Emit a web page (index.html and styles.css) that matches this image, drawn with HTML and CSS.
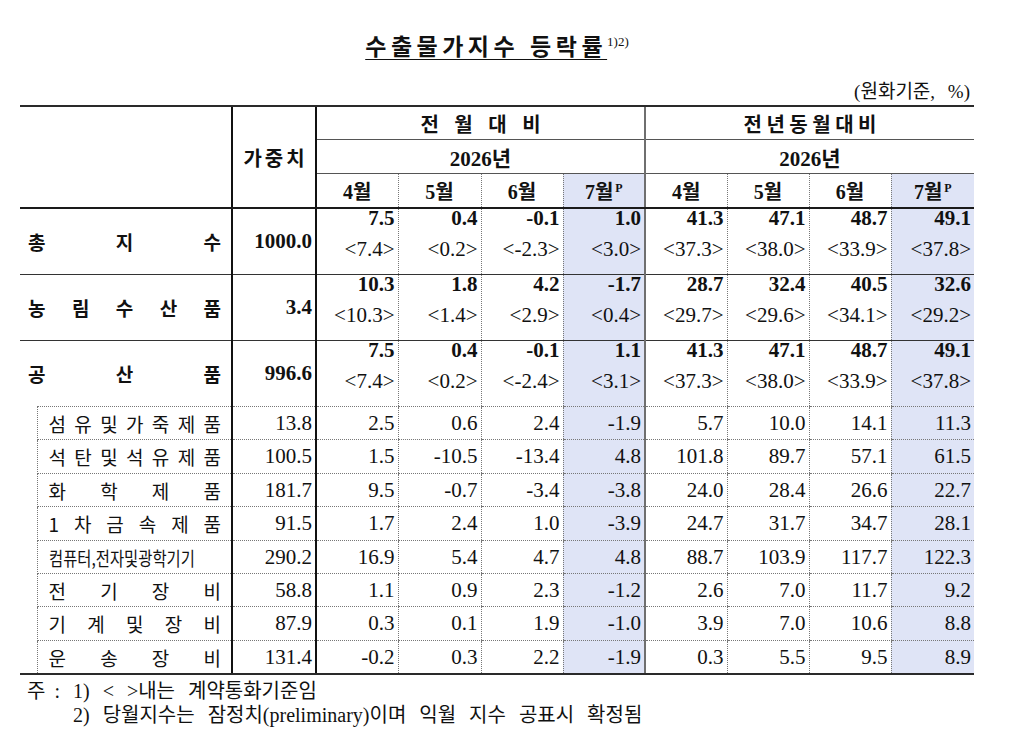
FILE: index.html
```html
<!DOCTYPE html>
<html lang="ko">
<head>
<meta charset="utf-8">
<title>수출물가지수 등락률</title>
<link rel="stylesheet" href="styles.css">
</head>
<body>
<div class="page">
  <div class="title"><span class="t">수출물가지수 등락률</span><sup>1)2)</sup></div>
  <div class="unit">(원화기준, %)</div>
  <table class="tbl">
    <colgroup>
      <col class="k-ind"><col class="k-lab"><col class="k-w">
      <col class="k-m"><col class="k-m2"><col class="k-m"><col class="k-m">
      <col class="k-m"><col class="k-m"><col class="k-m"><col class="k-m2">
    </colgroup>
    <thead>
      <tr class="h1">
        <th colspan="2" rowspan="3" class="corner"></th>
        <th rowspan="3" class="w hw"><span class="hwt">가중치</span></th>
        <th colspan="4" class="c1 grp"><span class="wide"><span>전</span><span>월</span><span>대</span><span>비</span></span></th>
        <th colspan="4" class="c5 grp"><span class="ls">전년동월대비</span></th>
      </tr>
      <tr class="h2">
        <th colspan="4" class="c1 yr">2026년</th>
        <th colspan="4" class="c5 yr">2026년</th>
      </tr>
      <tr class="h3">
        <th class="c1 mo">4월</th><th class="cd mo">5월</th><th class="cd mo">6월</th><th class="cd mo hl">7월<sup class="p">P</sup></th>
        <th class="c5 mo">4월</th><th class="cd mo">5월</th><th class="cd mo">6월</th><th class="cd mo hl">7월<sup class="p">P</sup></th>
      </tr>
    </thead>
    <tbody>
      <tr class="big">
        <th colspan="2" class="lab"><span class="dist"><span>총</span><span>지</span><span>수</span></span></th>
        <td class="w n bw">1000.0</td>
        <td class="n c1 dv"><div class="b">7.5</div><div class="s">&lt;7.4&gt;</div></td>
        <td class="n cd dv"><div class="b">0.4</div><div class="s">&lt;0.2&gt;</div></td>
        <td class="n cd dv"><div class="b">-0.1</div><div class="s">&lt;-2.3&gt;</div></td>
        <td class="n cd dv hl"><div class="b">1.0</div><div class="s">&lt;3.0&gt;</div></td>
        <td class="n c5 dv"><div class="b">41.3</div><div class="s">&lt;37.3&gt;</div></td>
        <td class="n cd dv"><div class="b">47.1</div><div class="s">&lt;38.0&gt;</div></td>
        <td class="n cd dv"><div class="b">48.7</div><div class="s">&lt;33.9&gt;</div></td>
        <td class="n cd dv hl"><div class="b">49.1</div><div class="s">&lt;37.8&gt;</div></td>
      </tr>
      <tr class="big">
        <th colspan="2" class="lab"><span class="dist"><span>농</span><span>림</span><span>수</span><span>산</span><span>품</span></span></th>
        <td class="w n bw">3.4</td>
        <td class="n c1 dv"><div class="b">10.3</div><div class="s">&lt;10.3&gt;</div></td>
        <td class="n cd dv"><div class="b">1.8</div><div class="s">&lt;1.4&gt;</div></td>
        <td class="n cd dv"><div class="b">4.2</div><div class="s">&lt;2.9&gt;</div></td>
        <td class="n cd dv hl"><div class="b">-1.7</div><div class="s">&lt;0.4&gt;</div></td>
        <td class="n c5 dv"><div class="b">28.7</div><div class="s">&lt;29.7&gt;</div></td>
        <td class="n cd dv"><div class="b">32.4</div><div class="s">&lt;29.6&gt;</div></td>
        <td class="n cd dv"><div class="b">40.5</div><div class="s">&lt;34.1&gt;</div></td>
        <td class="n cd dv hl"><div class="b">32.6</div><div class="s">&lt;29.2&gt;</div></td>
      </tr>
      <tr class="big last-big">
        <th colspan="2" class="lab"><span class="dist"><span>공</span><span>산</span><span>품</span></span></th>
        <td class="w n bw">996.6</td>
        <td class="n c1 dv"><div class="b">7.5</div><div class="s">&lt;7.4&gt;</div></td>
        <td class="n cd dv"><div class="b">0.4</div><div class="s">&lt;0.2&gt;</div></td>
        <td class="n cd dv"><div class="b">-0.1</div><div class="s">&lt;-2.4&gt;</div></td>
        <td class="n cd dv hl"><div class="b">1.1</div><div class="s">&lt;3.1&gt;</div></td>
        <td class="n c5 dv"><div class="b">41.3</div><div class="s">&lt;37.3&gt;</div></td>
        <td class="n cd dv"><div class="b">47.1</div><div class="s">&lt;38.0&gt;</div></td>
        <td class="n cd dv"><div class="b">48.7</div><div class="s">&lt;33.9&gt;</div></td>
        <td class="n cd dv hl"><div class="b">49.1</div><div class="s">&lt;37.8&gt;</div></td>
      </tr>
      <tr class="sub r33">
        <td class="ind"></td>
        <th class="slab"><span class="dist"><span>섬</span><span>유</span><span>및</span><span>가</span><span>죽</span><span>제</span><span>품</span></span></th>
        <td class="w n">13.8</td>
        <td class="n c1">2.5</td><td class="n cd">0.6</td><td class="n cd">2.4</td><td class="n cd hl">-1.9</td>
        <td class="n c5">5.7</td><td class="n cd">10.0</td><td class="n cd">14.1</td><td class="n cd hl">11.3</td>
      </tr>
      <tr class="sub r34">
        <td class="ind"></td>
        <th class="slab"><span class="dist"><span>석</span><span>탄</span><span>및</span><span>석</span><span>유</span><span>제</span><span>품</span></span></th>
        <td class="w n">100.5</td>
        <td class="n c1">1.5</td><td class="n cd">-10.5</td><td class="n cd">-13.4</td><td class="n cd hl">4.8</td>
        <td class="n c5">101.8</td><td class="n cd">89.7</td><td class="n cd">57.1</td><td class="n cd hl">61.5</td>
      </tr>
      <tr class="sub r33">
        <td class="ind"></td>
        <th class="slab"><span class="dist"><span>화</span><span>학</span><span>제</span><span>품</span></span></th>
        <td class="w n">181.7</td>
        <td class="n c1">9.5</td><td class="n cd">-0.7</td><td class="n cd">-3.4</td><td class="n cd hl">-3.8</td>
        <td class="n c5">24.0</td><td class="n cd">28.4</td><td class="n cd">26.6</td><td class="n cd hl">22.7</td>
      </tr>
      <tr class="sub r34">
        <td class="ind"></td>
        <th class="slab"><span class="dist"><span>1</span><span>차</span><span>금</span><span>속</span><span>제</span><span>품</span></span></th>
        <td class="w n">91.5</td>
        <td class="n c1">1.7</td><td class="n cd">2.4</td><td class="n cd">1.0</td><td class="n cd hl">-3.9</td>
        <td class="n c5">24.7</td><td class="n cd">31.7</td><td class="n cd">34.7</td><td class="n cd hl">28.1</td>
      </tr>
      <tr class="sub r33">
        <td class="ind"></td>
        <th class="slab"><span class="squeeze">컴퓨터,전자및광학기기</span></th>
        <td class="w n">290.2</td>
        <td class="n c1">16.9</td><td class="n cd">5.4</td><td class="n cd">4.7</td><td class="n cd hl">4.8</td>
        <td class="n c5">88.7</td><td class="n cd">103.9</td><td class="n cd">117.7</td><td class="n cd hl">122.3</td>
      </tr>
      <tr class="sub r33">
        <td class="ind"></td>
        <th class="slab"><span class="dist"><span>전</span><span>기</span><span>장</span><span>비</span></span></th>
        <td class="w n">58.8</td>
        <td class="n c1">1.1</td><td class="n cd">0.9</td><td class="n cd">2.3</td><td class="n cd hl">-1.2</td>
        <td class="n c5">2.6</td><td class="n cd">7.0</td><td class="n cd">11.7</td><td class="n cd hl">9.2</td>
      </tr>
      <tr class="sub r34">
        <td class="ind"></td>
        <th class="slab"><span class="dist"><span>기</span><span>계</span><span>및</span><span>장</span><span>비</span></span></th>
        <td class="w n">87.9</td>
        <td class="n c1">0.3</td><td class="n cd">0.1</td><td class="n cd">1.9</td><td class="n cd hl">-1.0</td>
        <td class="n c5">3.9</td><td class="n cd">7.0</td><td class="n cd">10.6</td><td class="n cd hl">8.8</td>
      </tr>
      <tr class="sub r33 last">
        <td class="ind"></td>
        <th class="slab"><span class="dist"><span>운</span><span>송</span><span>장</span><span>비</span></span></th>
        <td class="w n">131.4</td>
        <td class="n c1">-0.2</td><td class="n cd">0.3</td><td class="n cd">2.2</td><td class="n cd hl">-1.9</td>
        <td class="n c5">0.3</td><td class="n cd">5.5</td><td class="n cd">9.5</td><td class="n cd hl">8.9</td>
      </tr>
    </tbody>
  </table>
  <div class="notes">
    <div class="note"><span class="nh">주 :</span>1) &lt; &gt;내는 계약통화기준임</div>
    <div class="note"><span class="nh"></span>2) 당월지수는 잠정치(preliminary)이며 익월 지수 공표시 확정됨</div>
  </div>
</div>
</body>
</html>
```
FILE: styles.css
```css
html, body {
  margin: 0;
  padding: 0;
  background: #ffffff;
}

body {
  color: #111111;
  font-family: "Noto Sans CJK KR", "Noto Sans", sans-serif;
}

.page {
  width: 954px;
  margin-left: 20px;
}

.title {
  padding-top: 30px;
  height: 31px;
  line-height: 31px;
  text-align: center;
  font-size: 23px;
  font-weight: 700;
}

.title .t {
  letter-spacing: 4.5px;
  text-decoration: underline;
  text-decoration-thickness: 1px;
  text-underline-offset: 4px;
}

.title sup {
  font-family: "Liberation Serif", serif;
  font-size: 13px;
  font-weight: 400;
  line-height: 0;
  vertical-align: 9px;
}

.unit {
  margin-top: 19px;
  padding-right: 4px;
  text-align: right;
  font-family: "Liberation Serif", "Noto Sans CJK KR", serif;
  font-size: 19px;
  word-spacing: 8px;
  line-height: 24px;
  height: 25px;
}

.tbl {
  width: 954px;
  border-collapse: collapse;
  table-layout: fixed;
}

.k-ind { width: 17px; }
.k-lab { width: 195px; }
.k-w { width: 84px; }
.k-m { width: 82px; }
.k-m2 { width: 83px; }

.tbl th,
.tbl td {
  padding: 0;
  vertical-align: middle;
}

/* header */
.h1 th {
  border-top: 2px solid #2a2a2a;
  height: 32px;
}

.h2 th {
  height: 33px;
}

.h3 th {
  height: 33px;
  border-bottom: 2px solid #1a1a1a;
}

.corner {
  border-bottom: 2px solid #1a1a1a;
}

.hw {
  border-bottom: 2px solid #1a1a1a;
  font-size: 20px;
  font-weight: 700;
}

.hwt {
  letter-spacing: 3px;
  padding-left: 3px;
}

.grp {
  border-bottom: 1px solid #555555;
  font-size: 20px;
  font-weight: 700;
}

.grp .wide {
  display: inline-flex;
  gap: 15.5px;
}

.grp .ls {
  letter-spacing: 4.5px;
  padding-left: 4.5px;
}

.yr {
  border-bottom: 1px solid #555555;
  font-family: "Liberation Serif", "Noto Sans CJK KR", serif;
  font-size: 21px;
  font-weight: 700;
}

.mo {
  font-family: "Liberation Serif", "Noto Sans CJK KR", serif;
  font-size: 20px;
  font-weight: 700;
}

.mo .p {
  font-size: 12px;
  vertical-align: 7px;
  line-height: 0;
  margin-left: 2px;
}

/* column separators */
.w {
  border-left: 2px solid #111111;
}

.c1 {
  border-left: 2px solid #111111;
}

.c5 {
  border-left: 2px solid #6f6f6f;
}

.cd {
  border-left: 1px dotted #777777;
}

.hl {
  background: #dfe4f6;
}

/* body rows */
.n {
  text-align: right;
  padding-right: 3px !important;
  font-family: "Liberation Serif", "Noto Sans CJK KR", serif;
  font-size: 21px;
}

.big th,
.big td {
  height: 65px;
  border-bottom: 1px solid #333333;
}

.last-big th {
  border-bottom: none;
}

.last-big td {
  border-bottom: 1px dotted #777777;
}

.big td.dv {
  vertical-align: top;
}

.bw {
  font-weight: 700;
}

.dv .b {
  font-weight: 700;
  line-height: 16px;
  margin-top: 1px;
}

.dv .s {
  line-height: 22px;
  margin-top: 12px;
}

.lab {
  padding: 0 10px 0 8px !important;
  font-size: 19px;
  font-weight: 700;
}

.dist {
  display: flex;
  justify-content: space-between;
  align-items: center;
}

.sub td,
.sub th {
  border-bottom: 1px dotted #777777;
}

.r33 td, .r33 th { height: 32px; }
.r34 td, .r34 th { height: 33px; }

.sub td.ind {
  border: none;
}

.slab {
  border-left: 1px dotted #777777;
  border-top: 1px dotted #777777;
  padding: 0 10px 0 11px !important;
  font-size: 19px;
  font-weight: 400;
  text-align: left;
}

.squeeze {
  display: inline-block;
  white-space: nowrap;
  transform: scaleX(0.81);
  transform-origin: left center;
}

.sub.last td,
.sub.last th,
.sub.last td.ind {
  border-bottom: 2px solid #2a2a2a;
}

/* notes */
.notes {
  margin-top: 4px;
  padding-left: 7px;
  font-family: "Liberation Serif", "Noto Sans CJK KR", serif;
  font-size: 20px;
  word-spacing: 8px;
}

.note {
  line-height: 24px;
  white-space: nowrap;
}

.nh {
  display: inline-block;
  width: 46px;
  word-spacing: 4px;
}
```
